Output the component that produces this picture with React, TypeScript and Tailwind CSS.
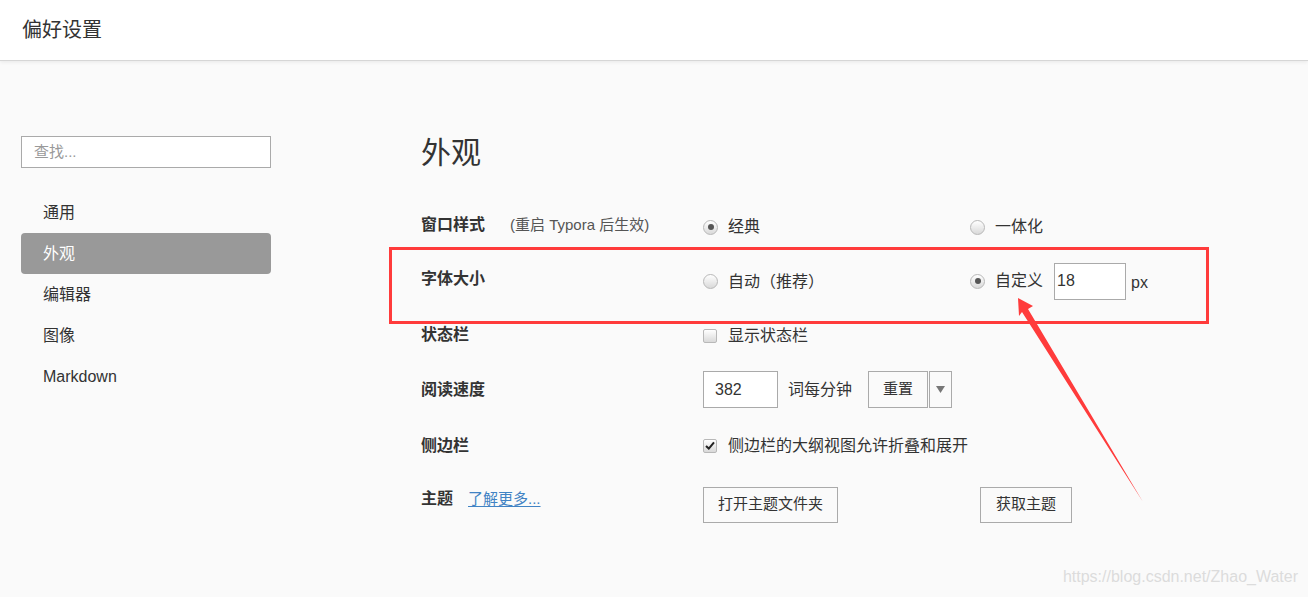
import React from "react";

function Radio({ checked }: { checked?: boolean }) {
  return (
    <span className="flex h-[15px] w-[15px] shrink-0 items-center justify-center rounded-full border border-[#b8b8b8] bg-linear-to-b from-[#ffffff] to-[#d9d9d9]">
      {checked && <span className="h-[6px] w-[6px] rounded-full bg-[#555]" />}
    </span>
  );
}

function Checkbox({ checked }: { checked?: boolean }) {
  return (
    <span className="flex h-[14px] w-[14px] shrink-0 items-center justify-center rounded-[2px] border border-[#b8b8b8] bg-linear-to-b from-[#ffffff] to-[#d9d9d9]">
      {checked && (
        <svg width="10" height="9" viewBox="0 0 10 9">
          <path d="M1 5 L3.8 7.6 L9 1.3" fill="none" stroke="#222" strokeWidth="2" />
        </svg>
      )}
    </span>
  );
}

const navItems = ["通用", "外观", "编辑器", "图像", "Markdown"];

export default function App() {
  return (
    <div className="relative h-screen overflow-hidden bg-[#fafafa] font-['Liberation_Sans','Noto_Sans_CJK_SC',sans-serif] text-[#333]">
      {/* Header */}
      <div className="relative z-10 flex h-[61px] items-center border-b border-[#d6d6d6] bg-white pl-[22px] shadow-[0_1px_4px_rgba(0,0,0,0.08)]">
        <span className="text-[20px] text-[#333]">偏好设置</span>
      </div>

      <div className="flex">
        {/* Sidebar */}
        <div className="ml-[21px] w-[250px] shrink-0 pt-[75px]">
          <div className="flex h-[32px] items-center border border-[#aaa] bg-white pl-[12px] text-[15px] text-[#999]">
            查找...
          </div>
          <div className="mt-[24px]">
            {navItems.map((item) => (
              <div
                key={item}
                className={`flex h-[41px] items-center rounded-[4px] pl-[22px] text-[16px] ${
                  item === "外观" ? "bg-[#999] text-white" : "text-[#333]"
                }`}
              >
                {item}
              </div>
            ))}
          </div>
        </div>

        {/* Content */}
        <div className="ml-[150px] flex-1 pt-[71px]">
          <div className="flex h-[40px] items-center text-[30px] text-[#333]">外观</div>

          <div className="mt-[26px] text-[16px]">
            {/* 窗口样式 */}
            <div className="flex h-[54px] items-center">
              <div className="flex w-[282px] items-center">
                <span className="font-semibold">窗口样式</span>
                <span className="ml-[25px] text-[15px] text-[#555]">(重启 Typora 后生效)</span>
              </div>
              <div className="flex w-[267px] items-center gap-[10px] pt-[4px]">
                <Radio checked />
                <span>经典</span>
              </div>
              <div className="flex items-center gap-[10px] pt-[4px]">
                <Radio />
                <span>一体化</span>
              </div>
            </div>

            {/* 字体大小 */}
            <div className="flex h-[55px] items-center">
              <div className="w-[282px] pb-[2px] font-semibold">字体大小</div>
              <div className="flex w-[267px] items-center gap-[10px] pt-[4px]">
                <Radio />
                <span>自动（推荐）</span>
              </div>
              <div className="flex items-center pt-[3px]">
                <Radio checked />
                <span className="ml-[10px]">自定义</span>
                <div className="ml-[11px] flex h-[37px] w-[72px] items-center border border-[#aaa] bg-white pl-[2px]">
                  18
                </div>
                <span className="ml-[5px] pt-[3px]">px</span>
              </div>
            </div>

            {/* 状态栏 */}
            <div className="flex h-[55px] items-center">
              <div className="w-[282px] font-semibold">状态栏</div>
              <div className="flex items-center gap-[11px] pt-[2px]">
                <Checkbox />
                <span>显示状态栏</span>
              </div>
            </div>

            {/* 阅读速度 */}
            <div className="flex h-[55px] items-center">
              <div className="w-[282px] font-semibold">阅读速度</div>
              <div className="flex h-[37px] w-[75px] items-center border border-[#aaa] bg-white pl-[11px]">
                382
              </div>
              <span className="ml-[10px]">词每分钟</span>
              <div className="ml-[16px] flex h-[37px] w-[60px] items-center justify-center border border-[#aaa] text-[15px]">
                重置
              </div>
              <div className="ml-px flex h-[37px] w-[23px] items-center justify-center border border-[#aaa]">
                <svg width="9" height="7" viewBox="0 0 9 7">
                  <path d="M0 0 H9 L4.5 7 Z" fill="#777" />
                </svg>
              </div>
            </div>

            {/* 侧边栏 */}
            <div className="flex h-[57px] items-center">
              <div className="w-[282px] font-semibold">侧边栏</div>
              <div className="flex items-center gap-[11px]">
                <Checkbox checked />
                <span>侧边栏的大纲视图允许折叠和展开</span>
              </div>
            </div>

            {/* 主题 */}
            <div className="flex h-[55px] items-center">
              <div className="flex w-[282px] items-center pb-[5px]">
                <span className="font-semibold">主题</span>
                <span className="ml-[15px] text-[15px] text-[#4183c4] underline underline-offset-2">了解更多...</span>
              </div>
              <div className="w-[267px] pt-[6px]">
                <div className="inline-flex h-[36px] items-center border border-[#aaa] px-[14px] text-[15px]">
                  打开主题文件夹
                </div>
              </div>
              <div className="ml-[10px] pt-[6px]">
                <div className="inline-flex h-[36px] items-center border border-[#aaa] px-[15px] text-[15px]">
                  获取主题
                </div>
              </div>
            </div>
          </div>
        </div>
      </div>

      {/* Annotation: red box */}
      <div className="pointer-events-none absolute left-[389px] top-[247px] h-[77px] w-[820px] border-[3px] border-[#ff3b3b]" />

      {/* Annotation: arrow */}
      <svg className="pointer-events-none absolute left-0 top-0" width="1308" height="597">
        <polygon
          points="1018,298 1033,306 1028,309 1143,502 1022,312 1019,316"
          fill="#ff3b3b"
        />
      </svg>

      {/* Watermark */}
      <div className="pointer-events-none absolute bottom-[8px] right-[10px] text-[16px] text-[#dcdcdc]">
        https://blog.csdn.net/Zhao_Water
      </div>
    </div>
  );
}
